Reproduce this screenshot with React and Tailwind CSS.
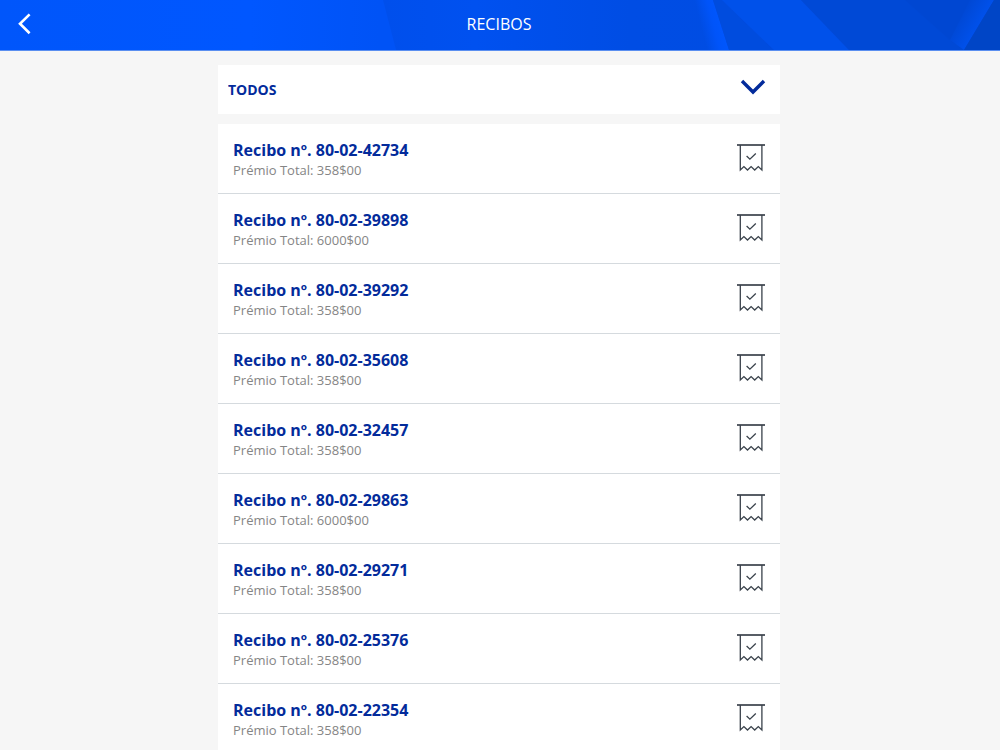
import { useState } from 'react'

const receipts = [
  { number: '80-02-42734', total: '358$00' },
  { number: '80-02-39898', total: '6000$00' },
  { number: '80-02-39292', total: '358$00' },
  { number: '80-02-35608', total: '358$00' },
  { number: '80-02-32457', total: '358$00' },
  { number: '80-02-29863', total: '6000$00' },
  { number: '80-02-29271', total: '358$00' },
  { number: '80-02-25376', total: '358$00' },
  { number: '80-02-22354', total: '358$00' },
]

function HeaderBackground() {
  return (
    <svg
      className="absolute inset-0 h-full w-full"
      viewBox="0 0 1000 50"
      preserveAspectRatio="none"
      aria-hidden="true"
    >
      <defs>
        <linearGradient id="base" x1="0" x2="1" y1="0" y2="0">
          <stop offset="0" stopColor="#0056fb" />
          <stop offset="0.25" stopColor="#0057ff" />
          <stop offset="0.38" stopColor="#0053f6" />
        </linearGradient>
        <linearGradient id="middle" x1="0" x2="1" y1="0" y2="0">
          <stop offset="0" stopColor="#004fec" />
          <stop offset="0.15" stopColor="#0051f0" />
          <stop offset="0.4" stopColor="#004de4" />
          <stop offset="1" stopColor="#004ce0" />
        </linearGradient>
        <linearGradient id="beam" gradientUnits="userSpaceOnUse" x1="696" x2="720" y1="6" y2="0">
          <stop offset="0" stopColor="#0056ff" stopOpacity="0" />
          <stop offset="0.5" stopColor="#0056ff" stopOpacity="0.8" />
          <stop offset="1" stopColor="#0058ff" />
        </linearGradient>
        <linearGradient id="edge" gradientUnits="userSpaceOnUse" x1="958" x2="980" y1="16" y2="29">
          <stop offset="0" stopColor="#0052ee" stopOpacity="0" />
          <stop offset="1" stopColor="#0052ee" />
        </linearGradient>
      </defs>
      <rect width="1000" height="50" fill="url(#base)" />
      <polygon points="383,0 1000,0 1000,50 396,50" fill="url(#middle)" />
      <polygon points="680,0 713,0 729,50 695,50" fill="url(#beam)" />
      <polygon points="713,0 722,0 774,50 729,50" fill="#004cde" />
      <polygon points="722,0 801,0 849,50 774,50" fill="#0051ea" />
      <polygon points="801,0 1000,0 1000,50 849,50" fill="#0049d6" />
      <polygon points="905,0 994,0 964,50 950,40" fill="#0046ce" opacity="0.5" />
      <polygon points="970,0 994,0 964,50 950,40" fill="url(#edge)" />
      <polygon points="994,0 1000,0 1000,50 964,50" fill="#0045c6" />
    </svg>
  )
}

function ReceiptIcon() {
  return (
    <svg
      className="h-[33px] w-8 shrink-0"
      viewBox="0 0 32 33"
      fill="none"
      stroke="#3a424b"
      strokeWidth="1.3"
      aria-hidden="true"
    >
      <path d="M2 3h28" strokeWidth="1.7" />
      <path d="M5.3 3v25l3.6-3.4 3.6 3.4 3.6-3.4 3.6 3.4 3.6-3.4 3.6 3.4V3" />
      <path d="M11.6 14l3.3 3.1 5.9-5.6" />
    </svg>
  )
}

export default function App() {
  const [filter, setFilter] = useState('todos')

  return (
    <div className="min-h-screen bg-[#f6f6f6] font-['Open_Sans',sans-serif]">
      <header className="relative flex h-[51px] items-center justify-center border-b border-[#5b8ff0] bg-[#0056fb] pr-0.5">
        <HeaderBackground />
        <button type="button" aria-label="Voltar" className="absolute left-4 top-3 text-white">
          <svg className="h-6 w-4" viewBox="0 0 16 24" fill="none" stroke="currentColor" strokeWidth="2.6" aria-hidden="true">
            <path d="M13.6 2.4L4 11.8l9.6 9.4" />
          </svg>
        </button>
        <h1 className="relative pb-0.5 text-base font-medium leading-5 text-white">RECIBOS</h1>
      </header>

      <main className="pl-4 pr-[18px] pt-[14px]">
        <div className="mx-auto max-w-[562px]">
          <div className="relative bg-white">
            <select
              aria-label="Filtrar recibos"
              value={filter}
              onChange={(e) => setFilter(e.target.value)}
              className="block h-[49px] w-full appearance-none px-[10px] text-sm font-bold text-[#032b9b]"
            >
              <option value="todos">TODOS</option>
            </select>
            <svg
              className="pointer-events-none absolute right-[14px] top-3 h-5 w-[26px]"
              viewBox="0 0 26 20"
              fill="none"
              stroke="#032b9b"
              strokeWidth="3.4"
              aria-hidden="true"
            >
              <path d="M2 4l11 11 11-11" />
            </svg>
          </div>

          <ul className="mt-[10px] bg-white">
            {receipts.map((receipt) => (
              <li
                key={receipt.number}
                className="flex h-[70px] items-center justify-between border-b border-[#d5dade] pl-[15px] pr-[13px]"
              >
                <div className="pt-0.5">
                  <h2 className="text-base font-bold leading-5 text-[#032b9b]">Recibo nº. {receipt.number}</h2>
                  <p className="text-[13px] leading-5 text-[#858585]">Prémio Total: {receipt.total}</p>
                </div>
                <ReceiptIcon />
              </li>
            ))}
          </ul>
        </div>
      </main>
    </div>
  )
}
